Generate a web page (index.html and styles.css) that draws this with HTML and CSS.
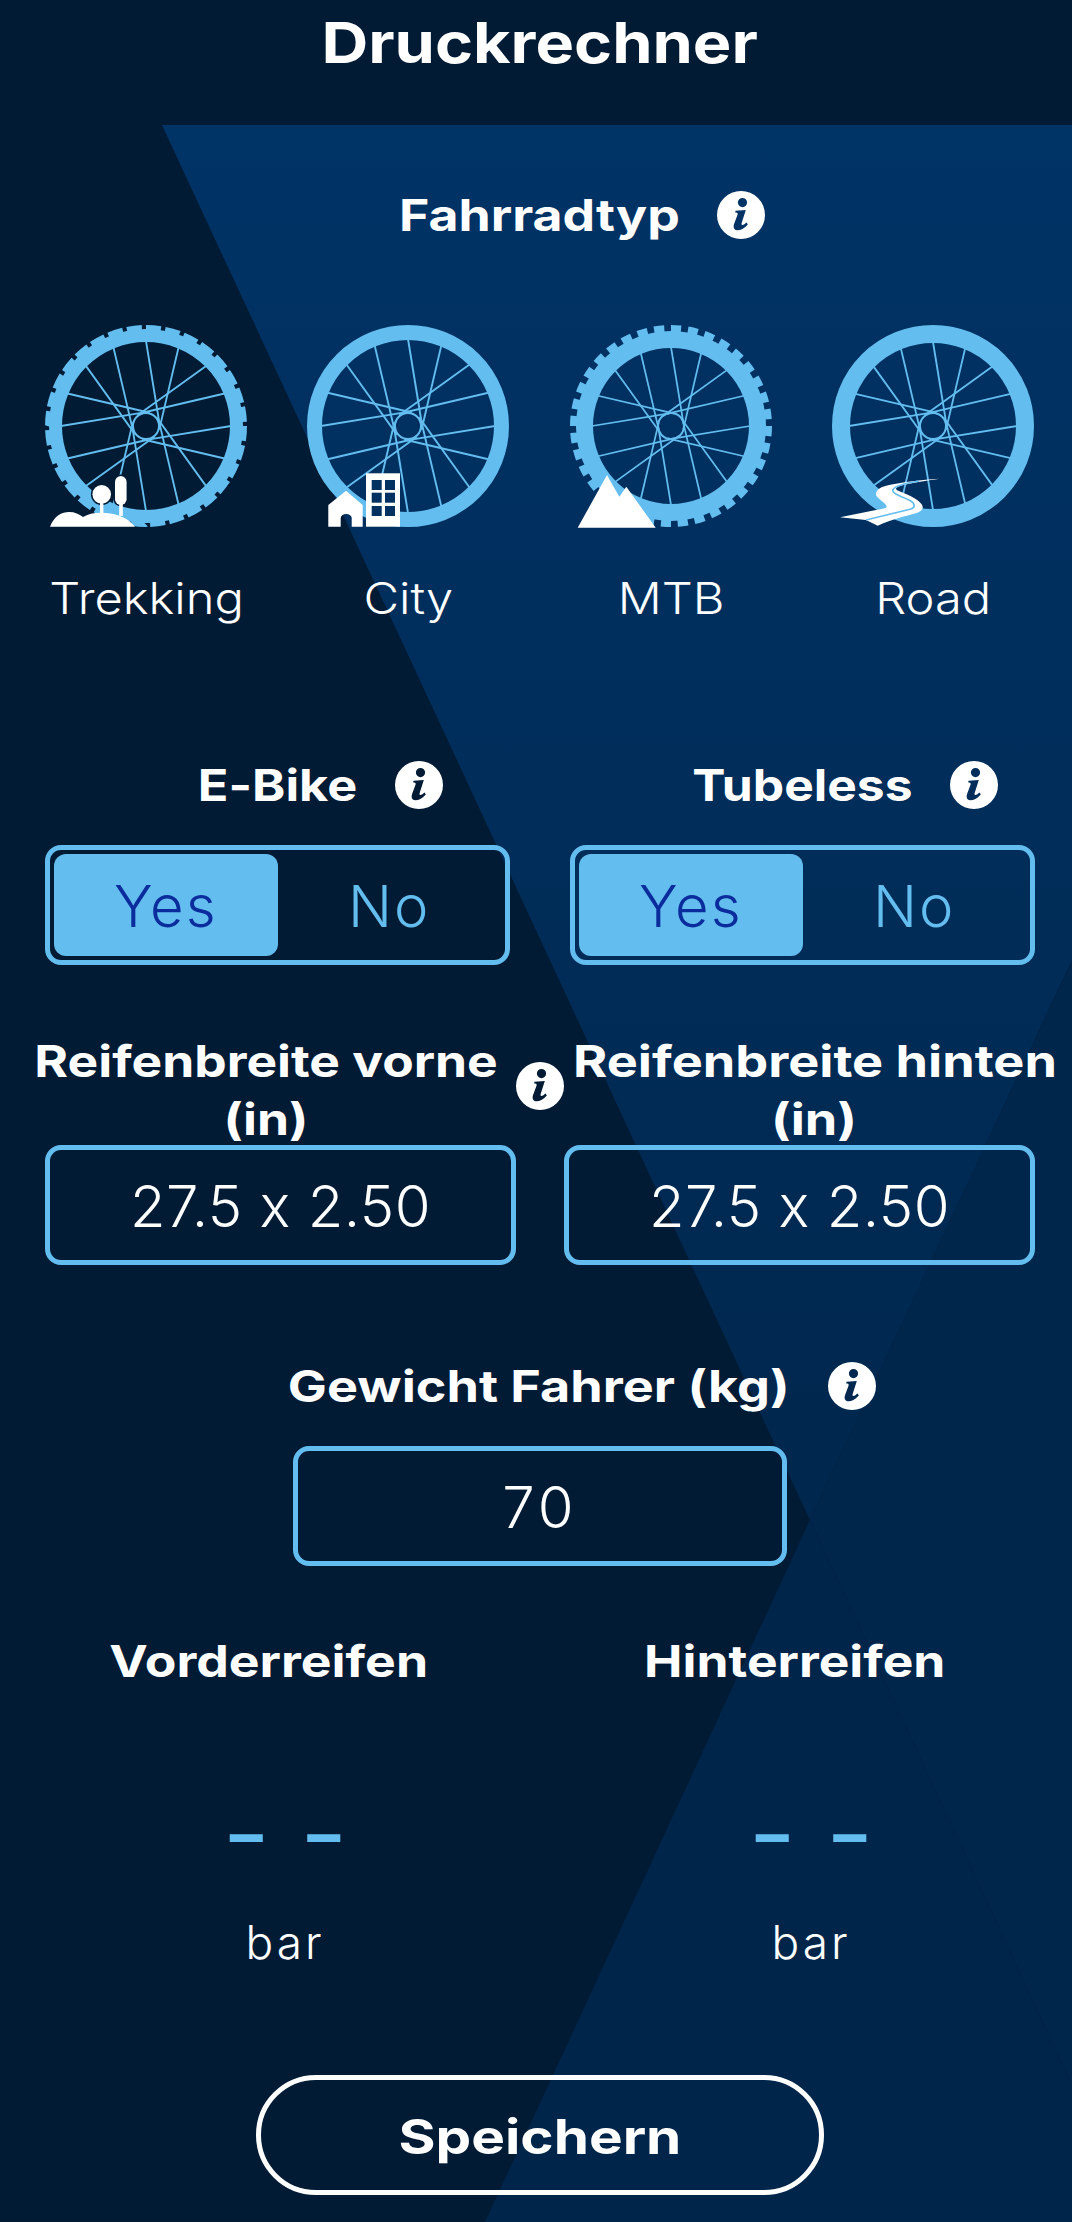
FILE: index.html
```html
<!DOCTYPE html>
<html lang="de">
<head>
<meta charset="utf-8">
<title>Druckrechner</title>
<link rel="stylesheet" href="styles.css">
</head>
<body>
<svg class="backdrop" viewBox="0 0 1072 2222" aria-hidden="true">
  <defs>
    <linearGradient id="blueTop" x1="0" y1="125" x2="0" y2="1520" gradientUnits="userSpaceOnUse">
      <stop offset="0" stop-color="#003366"/>
      <stop offset="1" stop-color="#00274d"/>
    </linearGradient>
    <g id="spokes">
      <g id="pair-a">
        <line x1="0" y1="-100" x2="16" y2="-2"/>
        <line x1="0" y1="-100" x2="16" y2="-2" transform="rotate(22.5)"/>
        <line x1="0" y1="-100" x2="-16" y2="-2" transform="rotate(45)"/>
        <line x1="0" y1="-100" x2="-16" y2="-2" transform="rotate(67.5)"/>
      </g>
      <use href="#pair-a" transform="rotate(90)"/>
      <use href="#pair-a" transform="rotate(180)"/>
      <use href="#pair-a" transform="rotate(270)"/>
    </g>
    <symbol id="info" viewBox="0 0 48 48">
      <path class="info-disc" fill-rule="evenodd" d="M24 0a24 24 0 1 0 0 48a24 24 0 1 0 0-48Z M25.5 7a4.6 4.6 0 1 0 0 9.2a4.6 4.6 0 1 0 0-9.2Z M18.5 19.8L28.8 19L24.6 32.2C24 34.6 26 34.6 29.6 31.4L30.8 33.4C27 37.6 23.6 39.2 20.6 39.2C17 39.2 16 36.6 17 33.2L20.6 23.4C21 21.8 19.6 21.6 18.2 21.6Z"/>
    </symbol>
  </defs>
  <rect x="0" y="0" width="1072" height="2222" fill="#011b35"/>
  <polygon points="162,125 1072,125 1072,960 810,1520" fill="url(#blueTop)"/>
  <polygon points="1072,960 810,1520 1072,2085" fill="#00264c"/>
  <polygon points="810,1520 1072,2085 1072,2222 485,2222" fill="#00254a"/>
</svg>

<main class="page">
  <header class="top"><h1 class="title">Druckrechner</h1></header>

  <div class="head head-type">
    <span class="label l-type">Fahrradtyp</span>
    <svg class="info"><use href="#info"/></svg>
  </div>

  <div class="wheels">
    <figure class="bike">
      <svg class="wheel" viewBox="-120 -102 240 204">
        <use href="#spokes" class="spoke" transform="scale(.85)"/>
        <circle class="hub" r="13"/>
        <circle class="tyre" r="90.5" stroke-width="13"/>
        <circle class="knobs" r="98.5" stroke-width="5" pathLength="32" stroke-dasharray=".78 .22"/>
        <g class="mark halo">
          <circle cx="-44.3" cy="68.3" r="9.3"/>
          <rect x="-31" y="50" width="11.6" height="29" rx="5.8"/>
        </g>
        <g class="mark">
          <rect x="-46" y="72" width="3.4" height="16"/>
          <rect x="-26.8" y="74" width="3.6" height="16"/>
          <path d="M-96 100.7C-92 90-84 86-77 86C-71 86-67 88-63 91C-57 87-48 86-40 87C-28 88-18 92-11 100.7Z"/>
        </g>
      </svg>
      <figcaption class="bike-name">Trekking</figcaption>
    </figure>
    <figure class="bike">
      <svg class="wheel" viewBox="-120 -102 240 204">
        <use href="#spokes" class="spoke" transform="scale(.87)"/>
        <circle class="hub" r="13"/>
        <circle class="tyre" r="93.5" stroke-width="15"/>
        <g class="mark">
          <path d="M-79.7 100.7V79L-62 64.7L-45.3 79V100.7H-56.3V92A5.5 4 0 0 0-67.3 92V100.7Z"/>
          <rect x="-42" y="47.3" width="34" height="53.4"/>
        </g>
        <g class="pane">
          <rect x="-36.3" y="54" width="10" height="10"/><rect x="-23" y="54" width="10" height="10"/>
          <rect x="-36.3" y="66.7" width="10" height="10"/><rect x="-23" y="66.7" width="10" height="10"/>
          <rect x="-36.3" y="80" width="10" height="10"/><rect x="-23" y="80" width="10" height="10"/>
        </g>
      </svg>
      <figcaption class="bike-name">City</figcaption>
    </figure>
    <figure class="bike">
      <svg class="wheel" viewBox="-120 -102 240 204">
        <use href="#spokes" class="spoke" transform="scale(.79)"/>
        <circle class="hub" r="13"/>
        <circle class="tyre" r="86.5" stroke-width="17"/>
        <circle class="knobs" r="97.5" stroke-width="7" pathLength="36" stroke-dasharray=".6 .4"/>
        <polygon class="mark" points="-93.3,101.7 -64,49 -51.7,70.7 -44.7,60.7 -15.3,101.7"/>
      </svg>
      <figcaption class="bike-name">MTB</figcaption>
    </figure>
    <figure class="bike">
      <svg class="wheel" viewBox="-120 -102 240 204">
        <use href="#spokes" class="spoke" transform="scale(.84)"/>
        <circle class="hub" r="13"/>
        <circle class="tyre" r="92" stroke-width="18"/>
        <path class="mark" d="M-93 91.3L-57 84C-50 83-46 82-46.3 80.7C-47 76-58 72-57 67.3C-56 63-52 60.7-44 59C-30 56-12 54 6.3 52.7C-8 55-28 58-34 60.5C-39 62.5-37 64-33 65.5C-24 69-11 75-10.3 80.7C-10 84-13 86-17 87.3C-27 90-40 93-55.3 99.7L-67 94Z"/>
        <path class="lane" d="M-67 94L-22 83C-17 81-18 77-24 74C-33 70-42 67-40 63.5C-38 60-26 57-14 55"/>
      </svg>
      <figcaption class="bike-name">Road</figcaption>
    </figure>
  </div>

  <div class="pair">
    <div class="choice">
      <div class="head head-choice">
        <span class="label l-ebike">E-Bike</span>
        <svg class="info"><use href="#info"/></svg>
      </div>
      <div class="toggle">
        <span class="opt opt-on">Yes</span>
        <span class="opt">No</span>
      </div>
    </div>
    <div class="choice">
      <div class="head head-choice">
        <span class="label l-tubeless">Tubeless</span>
        <svg class="info"><use href="#info"/></svg>
      </div>
      <div class="toggle">
        <span class="opt opt-on">Yes</span>
        <span class="opt">No</span>
      </div>
    </div>
  </div>

  <div class="tyre-heads">
    <div class="label tyre-head tyre-head-front">Reifenbreite vorne<br>(in)</div>
    <svg class="info info-tyre"><use href="#info"/></svg>
    <div class="label tyre-head tyre-head-rear">Reifenbreite hinten<br>(in)</div>
  </div>
  <div class="tyre-fields">
    <div class="field field-tyre">27.5 x 2.50</div>
    <div class="field field-tyre">27.5 x 2.50</div>
  </div>

  <div class="head head-weight">
    <span class="label l-weight">Gewicht Fahrer (kg)</span>
    <svg class="info"><use href="#info"/></svg>
  </div>
  <div class="field field-weight">70</div>

  <div class="results">
    <section class="result">
      <h2 class="label result-head l-front">Vorderreifen</h2>
      <div class="value">– –</div>
      <div class="unit">bar</div>
    </section>
    <section class="result">
      <h2 class="label result-head l-rear">Hinterreifen</h2>
      <div class="value">– –</div>
      <div class="unit">bar</div>
    </section>
  </div>

  <button class="save" type="button"><span class="save-text">Speichern</span></button>
</main>
</body>
</html>
```

FILE: styles.css
```css
* { box-sizing: border-box; }

html, body {
  margin: 0;
  padding: 0;
  background: #011b35;
}

body {
  position: relative;
  width: 1072px;
  height: 2222px;
  overflow: hidden;
  font-family: Inter, "Liberation Sans", sans-serif;
  font-feature-settings: "calt" 0;
  color: #fff;
}

.backdrop {
  position: absolute;
  left: 0;
  top: 0;
  width: 1072px;
  height: 2222px;
}

.page {
  position: relative;
  display: flex;
  flex-direction: column;
  height: 2222px;
}

.top {
  height: 125px;
  padding-left: 8px;
}

.title {
  width: fit-content;
  margin: 0 auto;
  font-size: 56px;
  line-height: 86px;
  font-weight: 700;
  transform: scaleX(1.157);
}

.label {
  font-size: 44px;
  line-height: 58px;
  font-weight: 700;
  margin: 0;
}

/* Wide headings: the label keeps its natural box and is stretched about its centre. */
.l-type { margin: 0 21px; transform: scaleX(1.176); }
.l-ebike { margin: 0 10px; transform: scaleX(1.146); }
.l-tubeless { margin: 0 12.5px; transform: scaleX(1.13); }
.l-weight { margin: 0 39px; transform: scaleX(1.185); }
.l-front { transform: scaleX(1.175); }
.l-rear { transform: scaleX(1.17); }

.head {
  display: flex;
  align-items: center;
  justify-content: center;
  gap: 38px;
  height: 48px;
}

.head-type { margin-top: 66px; padding-left: 92px; }
.head-choice { padding-left: 86px; }
.head-weight { margin-top: 97px; padding-left: 92px; }

.info {
  display: block;
  flex: none;
  width: 48px;
  height: 48px;
}

.info-disc { fill: #fff; }

.wheels {
  display: grid;
  grid-template-columns: repeat(4, 262.3px);
  margin-top: 85px;
  padding-left: 15px;
}

.bike {
  margin: 0;
  display: flex;
  flex-direction: column;
  align-items: center;
}

.wheel {
  display: block;
  width: 240px;
  height: 204px;
}

.spoke {
  stroke: #63bdef;
  stroke-width: 2.2;
  fill: none;
}

.hub {
  fill: none;
  stroke: #63bdef;
  stroke-width: 2;
}

.tyre, .knobs {
  fill: none;
  stroke: #63bdef;
}

.mark { fill: #fff; }
.halo { stroke: #011b35; stroke-width: 3; paint-order: stroke; }
.pane { fill: #003160; }
.lane { fill: none; stroke: #63bdef; stroke-width: 1.6; }

.bike-name {
  margin-top: 40px;
  font-size: 44px;
  line-height: 60px;
  font-weight: 300;
  transform: scaleX(1.11);
}

.pair {
  display: grid;
  grid-template-columns: 465px 465px;
  column-gap: 60px;
  margin-top: 133px;
  padding-left: 45px;
}

.toggle {
  display: grid;
  grid-template-columns: 1fr 1fr;
  height: 120px;
  margin-top: 36px;
  padding: 4px;
  border: 5px solid #63bdef;
  border-radius: 16px;
}

.opt {
  display: flex;
  align-items: center;
  justify-content: center;
  padding-top: 2px;
  font-size: 58px;
  letter-spacing: 2px;
  font-weight: 300;
  color: #63bdef;
  border-radius: 12px;
}

.opt-on {
  background: #63bdef;
  color: #0b2c9c;
}

.tyre-heads {
  display: flex;
  align-items: flex-start;
  margin-top: 67px;
  padding-left: 34px;
  height: 113px;
}

.tyre-head { text-align: center; white-space: nowrap; }
.tyre-head-front { width: 396px; margin: 0 34px; transform: scaleX(1.17); }
.tyre-head-rear { width: 406px; margin: 0 0 0 47px; transform: scaleX(1.187); }
.info-tyre { margin: 30px 0 0 18px; }

.tyre-fields {
  display: grid;
  grid-template-columns: 471px 471px;
  column-gap: 48px;
  padding-left: 45px;
}

.field {
  display: flex;
  align-items: center;
  justify-content: center;
  height: 120px;
  padding-top: 2px;
  border: 5px solid #63bdef;
  border-radius: 16px;
  font-size: 58px;
  font-weight: 300;
  color: #fff;
}

.field-tyre { letter-spacing: .5px; }

.field-weight {
  width: 494px;
  margin: 36px 0 0 293px;
  letter-spacing: 4px;
}

.results {
  display: grid;
  grid-template-columns: 526px 526px;
  margin-top: 66px;
  padding-left: 6px;
}

.result { text-align: center; }

.result-head {
  width: fit-content;
  margin: 0 auto;
}

.value {
  margin-top: 104px;
  padding-left: 32px;
  font-size: 66px;
  line-height: 80px;
  font-weight: 700;
  color: #63bdef;
  word-spacing: 29px;
}

.unit {
  margin-top: 38px;
  padding-left: 32px;
  font-size: 46px;
  line-height: 60px;
  font-weight: 300;
  letter-spacing: 3px;
}

.save {
  align-self: flex-start;
  width: 568px;
  height: 120px;
  margin: 103px 0 0 256px;
  padding: 3px 0 0;
  background: transparent;
  border: 5px solid #fff;
  border-radius: 60px;
  color: #fff;
  font-family: inherit;
  font-size: 48px;
  font-weight: 700;
}

.save-text {
  display: inline-block;
  transform: scaleX(1.18);
}
```
